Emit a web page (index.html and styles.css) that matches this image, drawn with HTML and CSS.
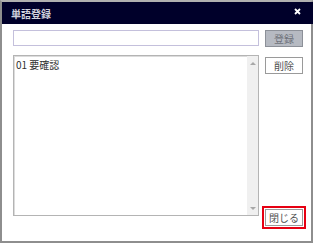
FILE: index.html
```html
<!DOCTYPE html>
<html>
    <head>
        <title>単語登録</title>
        <link rel="stylesheet" href="styles.css">
    </head>
    <body>
        <div class="window">
            <div class="titlebar">
                <span class="title">単語登録</span>
                <svg class="close" width="7" height="7" viewBox="0 0 7 7">
                    <path d="M1 1L6 6M6 1L1 6" stroke="white" stroke-width="1.8"/>
                </svg>
            </div>
            <div class="content">
                <div class="row">
                    <input type="text" class="input" />
                    <div class="button disabled">登録</div>
                </div>
                <div class="row main">
                    <div class="list">
                        <div class="items">
                            <div class="item">01 要確認</div>
                        </div>
                        <div class="scrollbar">
                            <span class="arrow up"></span>
                            <span class="arrow down"></span>
                        </div>
                    </div>
                    <div class="side">
                        <div class="button">削除</div>
                        <div class="button focused">閉じる</div>
                    </div>
                </div>
            </div>
        </div>
    </body>
</html>
```

FILE: styles.css
```css
body {
    margin: 0;
    font-family: "Noto Sans CJK JP", "DejaVu Sans", sans-serif;
    font-size: 10px;
    background-color: white;
}
.window {
    width: 313px;
    height: 243px;
    box-sizing: border-box;
    border: 2px solid #8e8e8e;
    border-top-color: #b0b0b0;
    background-color: white;
}
.titlebar {
    height: 22px;
    background-color: #00002a;
    color: #d0d0dc;
    display: flex;
    align-items: center;
    justify-content: space-between;
    padding: 0 9px;
    margin: 0 -2px 0 0;
}
.title {
    font-size: 10px;
    font-weight: bold;
}
.close {
    margin-right: 3px;
    margin-top: -3px;
}
.content {
    padding: 6px 8px 0 11px;
}
.row {
    display: flex;
    gap: 6px;
}
.main {
    margin-top: 8px;
    align-items: flex-start;
}
.input {
    width: 246px;
    height: 16px;
    box-sizing: border-box;
    margin: 0;
    padding: 0 3px;
    border: 1px solid #c4c0dc;
    outline: none;
}
.button {
    width: 38px;
    height: 17px;
    box-sizing: border-box;
    border: 1px solid #9a9a9a;
    background-color: white;
    color: #505050;
    font-size: 10px;
    line-height: 15px;
    text-align: center;
    user-select: none;
}
.disabled {
    background-color: #b6bac2;
    border-color: #8c9098;
    color: #6e727a;
}
.focused {
    outline: 2px solid #e60012;
    outline-offset: 1px;
}
.list {
    width: 246px;
    height: 161px;
    box-sizing: border-box;
    border: 1px solid #b4b4b4;
    box-shadow: inset 1px 1px #dcdcdc;
    display: flex;
}
.items {
    flex: 1;
    padding: 2px 2px;
}
.item {
    color: #303030;
    line-height: 14px;
}
.scrollbar {
    width: 11px;
    background-color: #f0f0f0;
    display: flex;
    flex-direction: column;
    justify-content: space-between;
    align-items: center;
    padding: 6px 0 5px;
}
.arrow {
    width: 0;
    height: 0;
    border-left: 3px solid transparent;
    border-right: 3px solid transparent;
}
.up {
    border-bottom: 3px solid #a8a8a8;
}
.down {
    border-top: 3px solid #a8a8a8;
}
.side {
    height: 169px;
    margin-top: 2px;
    display: flex;
    flex-direction: column;
    justify-content: space-between;
}
```
